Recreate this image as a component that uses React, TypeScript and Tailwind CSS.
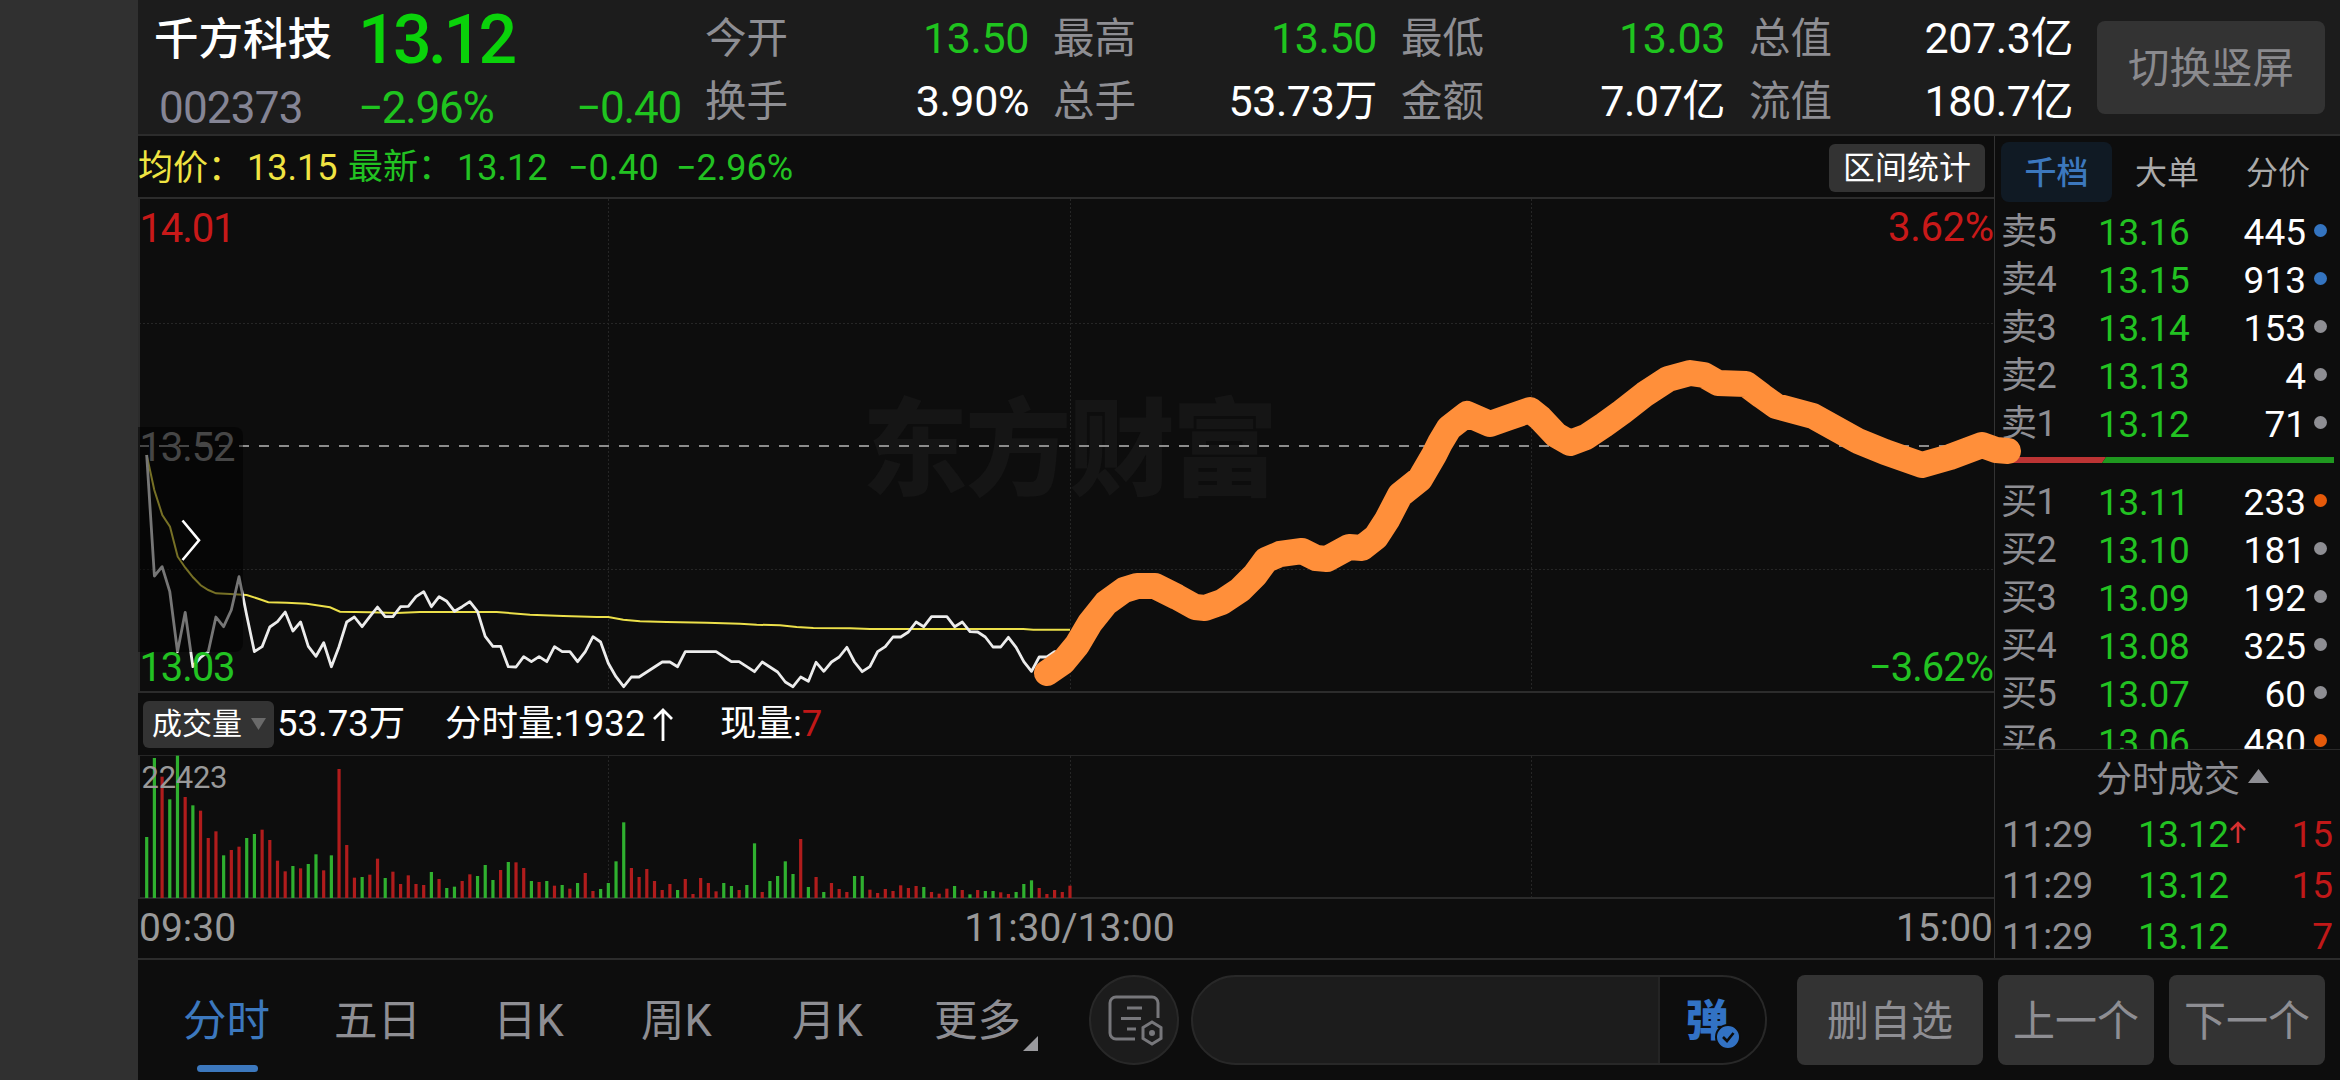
import { clsx } from "clsx";

const quotes = [
  [
    { label: "今开", value: "13.50", down: true },
    { label: "换手", value: "3.90%" },
  ],
  [
    { label: "最高", value: "13.50", down: true },
    { label: "总手", value: "53.73万" },
  ],
  [
    { label: "最低", value: "13.03", down: true },
    { label: "金额", value: "7.07亿" },
  ],
  [
    { label: "总值", value: "207.3亿" },
    { label: "流值", value: "180.7亿" },
  ],
];

const asks = [
  { label: "卖5", price: "13.16", qty: 445, dot: "bg-[#3474c0]" },
  { label: "卖4", price: "13.15", qty: 913, dot: "bg-[#3474c0]" },
  { label: "卖3", price: "13.14", qty: 153, dot: "bg-[#8e8e93]" },
  { label: "卖2", price: "13.13", qty: 4, dot: "bg-[#8e8e93]" },
  { label: "卖1", price: "13.12", qty: 71, dot: "bg-[#8e8e93]" },
];

const bids = [
  { label: "买1", price: "13.11", qty: 233, dot: "bg-[#e65a0a]" },
  { label: "买2", price: "13.10", qty: 181, dot: "bg-[#8e8e93]" },
  { label: "买3", price: "13.09", qty: 192, dot: "bg-[#8e8e93]" },
  { label: "买4", price: "13.08", qty: 325, dot: "bg-[#8e8e93]" },
  { label: "买5", price: "13.07", qty: 60, dot: "bg-[#8e8e93]" },
  { label: "买6", price: "13.06", qty: 480, dot: "bg-[#e65a0a]" },
];

const trades = [
  { time: "11:29", price: "13.12", qty: 15, up: true },
  { time: "11:29", price: "13.12", qty: 15 },
  { time: "11:29", price: "13.12", qty: 7 },
];

// One value per minute, in thirds of a pixel below the chart's y = 380
const prices = [
  225, 588, 560, 635, 815, 697, 860, 832, 815, 711, 740, 690, 590, 706, 815, 800, 741, 725, 696, 753,
  726, 799, 829, 788, 860, 800, 726, 711, 740, 710, 681, 710, 710, 680, 679, 650, 635, 680, 650, 664,
  694, 680, 665, 694, 769, 799, 799, 860, 861, 830, 845, 830, 845, 800, 815, 815, 845, 815, 770, 786,
  850, 890, 920, 891, 891, 876, 861, 846, 846, 860, 815, 815, 815, 815, 815, 830, 845, 845, 860, 875,
  846, 861, 876, 906, 920, 891, 904, 847, 874, 846, 831, 802, 846, 875, 860, 815, 800, 771, 771, 756,
  726, 740, 710, 710, 710, 740, 726, 755, 756, 771, 801, 801, 772, 802, 845, 874, 831, 831, 815, 815,
];

const average = [
  [50, 225], [73, 330], [97, 405], [120, 440], [143, 530], [166, 563], [189, 592], [212, 616], [235, 630],
  [258, 640], [300, 642], [350, 645], [385, 656], [415, 667], [470, 668], [530, 671], [560, 676], [600, 682],
  [630, 695], [720, 697], [800, 699], [870, 696], [1100, 696], [1200, 704], [1300, 708], [1400, 711],
  [1435, 711], [1480, 719], [1530, 724], [1610, 726], [1730, 728], [1830, 731], [1880, 734], [1950, 736],
  [2000, 741], [2050, 744], [2160, 745], [2220, 747], [2680, 747], [2710, 749], [2820, 749],
];

// Negative = falling minute (green), positive = rising minute (red)
const volumes = [
  -183, -420, 364, -296, -427, 303, -278, 262, 180, 200, -128, 144, 154, -180, -192, 205, 174, 112, 80, -96,
  89, -102, -131, 83, -128, 387, 159, 61, -63, 70, 118, -60, 79, 42, 68, 42, 39, -78, 57, -30,
  -34, 51, 71, -66, -99, -54, 84, -108, 107, 90, -51, 48, -51, 37, -39, 28, -45, 75, 21, -27,
  -45, -110, -227, 90, 63, 87, 51, 24, 42, -24, 57, 12, 60, 45, 20, -45, -36, 24, -39, -164,
  18, -51, -66, -110, -72, 177, -33, 63, -18, 45, 27, 18, -66, -66, 25, 15, 27, 21, 38, 30,
  36, -33, 18, 13, 28, -36, 24, -11, 24, -21, -21, 17, 12, -18, -42, -53, 30, 12, 24, 18, 37,
];

const minuteX = (i: number) => 146.7 + i * 7.694;
const pricePoints = prices.map((p, i) => `${minuteX(i).toFixed(1)},${(380 + p / 3).toFixed(1)}`).join(" ");
const averagePoints = average.map(([x, y]) => `${(130 + x / 3).toFixed(1)},${(380 + y / 3).toFixed(1)}`).join(" ");

const brush =
  "1047,673 1063,662 1077,645 1090,623 1106,603 1124,590 1137,586 1155,586 1177,597 1195,607 1205,608 1222,602 1240,590 1255,575 1266,560 1280,554 1302,551 1316,558 1327,559 1349,547 1362,548 1376,537 1387,520 1400,495 1420,479 1434,455 1440,443 1449,428 1467,414 1490,424 1507,418 1530,410 1540,418 1556,435 1570,443 1586,437 1604,425 1622,412 1645,394 1668,379 1690,373 1704,375 1718,383 1746,384 1762,396 1776,406 1813,416 1858,441 1885,452 1922,465 1950,457 1982,445 1996,450 2008,451";

function QuoteHeader() {
  return (
    <header className="flex h-[136px] shrink-0 border-b-2 border-[#2c2c2c] bg-[#1c1c1c] pr-[15px]">
      <div className="w-[567px] pl-4">
        <div className="flex h-[74px] items-center pt-1.5">
          <h1 className="w-[204px] text-[44.5px] leading-none font-medium text-white">千方科技</h1>
          <span className="text-[68px] leading-none font-medium tracking-[-3.6px] text-[#0ad20a]">13.12</span>
        </div>
        <div className="flex h-[67px] items-center text-[44px] leading-none">
          <span className="w-[204px] pl-[5px] tracking-[-0.8px] text-[#858595]">002373</span>
          <span className="tracking-[-1.3px] text-[#1fc41f]">−2.96%</span>
          <span className="ml-auto pr-[24px] tracking-[-1.2px] text-[#1fc41f]">−0.40</span>
        </div>
      </div>
      <div className="flex gap-[22px]">
        {quotes.map((column, index) => (
          <div key={index} className="flex w-[326px] flex-col pt-[7px]">
            {column.map((item) => (
              <div key={item.label} className="flex h-[63px] items-center justify-between leading-none">
                <span className="text-[41.5px] text-[#8e8e93]">{item.label}</span>
                <span className={clsx("pr-[2px] text-[43px] tracking-[-0.4px]", item.down ? "text-[#1fc41f]" : "text-white")}>
                  {item.value}
                </span>
              </div>
            ))}
          </div>
        ))}
      </div>
      <button className="mt-[21px] ml-auto h-[93px] w-[228px] rounded-lg bg-[#333] pt-[2px] text-[41.5px] leading-none text-[#8a8a8e]">
        切换竖屏
      </button>
    </header>
  );
}

function PriceChart() {
  return (
    <svg className="relative z-10 block h-[494px] w-[1856px] shrink-0 overflow-visible" viewBox="138 199 1856 494">
      <text
        x="1070"
        y="487"
        textAnchor="middle"
        textLength="416"
        className="fill-[#151515] text-[106px] font-black"
      >
        东方财富
      </text>
      <g stroke="#262626" strokeWidth="1" strokeDasharray="2 2">
        <path d="M139 323.5H1994M139 569.5H1994" />
        <path d="M608.5 199V692M1070.5 199V692M1531.5 199V692" />
      </g>
      <path d="M139 446H1994" stroke="#8c8c8c" strokeWidth="2" strokeDasharray="10 10" />
      <path d="M139 199V692H1994" fill="none" stroke="#2c2c2c" strokeWidth="2" />
      <text x="139.5" y="461" className="fill-[#8c8c8c] text-[40px]" textLength="96">13.52</text>
      <polyline points={averagePoints} fill="none" stroke="#ece04a" strokeWidth="2" />
      <polyline points={pricePoints} fill="none" stroke="#ececec" strokeWidth="2.8" strokeLinejoin="round" />
      <path d="M138 427H235a8 8 0 0 1 8 8V644a8 8 0 0 1-8 8H138Z" fill="#000" fillOpacity="0.5" />
      <path d="M182.5 520.5L199 540.3L182.5 560" fill="none" stroke="#fff" strokeWidth="2.6" />
      <g className="text-[40px]">
        <text x="139.5" y="242" className="fill-[#c81919]" textLength="96">14.01</text>
        <text x="139.5" y="681" className="fill-[#22c222]" textLength="96">13.03</text>
        <text x="1888" y="241" className="fill-[#c81919]" textLength="106">3.62%</text>
        <text x="1869" y="681" className="fill-[#22c222]" textLength="125">−3.62%</text>
      </g>
      <polyline
        points={brush}
        fill="none"
        stroke="#ff8f3a"
        strokeWidth="26"
        strokeLinejoin="round"
        strokeLinecap="round"
      />
    </svg>
  );
}

function VolumeChart() {
  return (
    <svg className="block h-[144px] w-[1856px] shrink-0" viewBox="138 755 1856 144">
      <path d="M139 755.5H1994" stroke="#262626" />
      <g stroke="#262626" strokeDasharray="2 2">
        <path d="M608.5 756V897M1070.5 756V897M1531.5 756V897" />
      </g>
      <path d="M139 755V898H1994" fill="none" stroke="#2a2a2a" strokeWidth="2" />
      {volumes.map((v, i) => (
        <rect
          key={i}
          x={minuteX(i) - 1.6}
          y={898 - Math.abs(v) / 3}
          width="3.2"
          height={Math.abs(v) / 3}
          fill={v < 0 ? "#2fb02f" : "#b01c1c"}
        />
      ))}
      <text x="141.5" y="788" className="fill-[#999] text-[31px]" textLength="86">22423</text>
    </svg>
  );
}

function BookRow({ label, price, qty, dot }: (typeof asks)[number]) {
  return (
    <div className="flex h-12 shrink-0 items-center text-[37px] leading-none">
      <span className="w-[97px] text-[36px] tracking-[-0.5px] text-[#8e8e93]">{label}</span>
      <span className="tracking-[-0.3px] text-[#22c222]">{price}</span>
      <span className="ml-auto text-white">{qty}</span>
      <i className={clsx("mr-[13px] mb-1 ml-[8px] size-[13px] rounded-full", dot)} />
    </div>
  );
}

function OrderBook() {
  return (
    <aside className="flex w-[346px] flex-col border-l border-[#333]">
      <div className="flex h-[71px] shrink-0 items-start pt-[6px] pl-[6px] text-[32px] leading-none text-[#aaa]">
        <button className="h-[60px] w-[111px] rounded-lg bg-[#101a24] pt-[2px] font-medium text-[#3c78be]">千档</button>
        <button className="h-[60px] w-[110px] pt-[2px]">大单</button>
        <button className="h-[60px] w-[112px] pt-[2px]">分价</button>
      </div>
      <div className="flex h-[542px] shrink-0 flex-col overflow-hidden pt-px pl-[6px]">
        {asks.map((row) => (
          <BookRow key={row.label} {...row} />
        ))}
        <svg className="mt-[9px] mb-[15px] block h-[6px] w-[333px] shrink-0" viewBox="0 0 333 6">
          <path d="M0 0H105L101 6H0Z" fill="#bc3434" />
          <path d="M105 0H333V6H101Z" fill="#1f981f" />
        </svg>
        {bids.map((row) => (
          <BookRow key={row.label} {...row} />
        ))}
      </div>
      <div className="flex h-[209px] shrink-0 flex-col border-t border-[#2a2a2a] pl-[7px]">
        <div className="flex h-[59px] shrink-0 items-center gap-[8px] pl-[94px] text-[36px] leading-none text-[#8e8e93]">
          分时成交
          <svg className="mb-2 h-[14px] w-[21px]" viewBox="0 0 21 14">
            <path d="M10.5 0L21 14H0Z" fill="#8e8e93" />
          </svg>
        </div>
        {trades.map((trade, index) => (
          <div key={index} className="flex h-[51px] shrink-0 items-center text-[37px] leading-none">
            <span className="w-[136px] tracking-[-0.2px] text-[#8e8e93]">{trade.time}</span>
            <span className="tracking-[-0.5px] text-[#22c222]">{trade.price}</span>
            {trade.up && (
              <svg className="mb-1 ml-[2px] h-[23px] w-[16px]" viewBox="0 0 16 23">
                <path d="M8 22V2M1 9L8 2L15 9" fill="none" stroke="#d63030" strokeWidth="2.6" />
              </svg>
            )}
            <span className="ml-auto pr-[7px] text-[#c01818]">{trade.qty}</span>
          </div>
        ))}
      </div>
    </aside>
  );
}

function Toolbar() {
  return (
    <footer className="flex h-[122px] shrink-0 items-start border-t-2 border-[#2c2c2c] pt-[15px] pr-[15px] text-[43.5px] leading-none text-[#8e8e93]">
      <nav className="flex w-[951px] pl-[45px]">
        <button className="flex h-[98px] w-[151px] flex-col text-[#3c78be]">
          <span className="flex h-[90px] items-center pt-[3px]">分时</span>
          <i className="ml-[14px] h-[7px] w-[61px] shrink-0 rounded-full bg-[#3c78be]" />
        </button>
        <button className="h-[90px] w-[159px] pt-[3px] text-left">五日</button>
        <button className="h-[90px] w-[148px] pt-[3px] text-left">日K</button>
        <button className="h-[90px] w-[151px] pt-[3px] text-left">周K</button>
        <button className="h-[90px] w-[142px] pt-[3px] text-left">月K</button>
        <button className="flex h-[90px] items-center pt-[3px]">
          更多
          <svg className="mt-[44px] ml-[2px] size-[15px]" viewBox="0 0 15 15">
            <path d="M15 0V15H0Z" fill="#9a9a9e" />
          </svg>
        </button>
      </nav>
      <button className="flex size-[90px] items-center justify-center rounded-full border-2 border-[#282828] bg-[#1c1c1c]">
        <svg className="h-[52px] w-[58px]" viewBox="0 0 58 52" fill="none" stroke="#77777b" strokeWidth="3">
          <path d="M30 45H11a6 6 0 0 1-6-6V9a6 6 0 0 1 6-6H47a6 6 0 0 1 6 6V24" />
          <path d="M22 14H37M16 24.500H36M22 35H31" />
          <path d="M47 28L56 33.500V44.500L47 50L38 44.500V33.500Z" />
          <circle cx="47" cy="39" r="1.500" />
        </svg>
      </button>
      <div className="ml-[12px] flex h-[90px] w-[576px] overflow-hidden rounded-full border-2 border-[#282828] bg-[#1c1c1c]">
        <div className="flex-1" />
        <button className="relative w-[107px] border-l-2 border-[#242424] bg-[#0d0d0d] pt-[2px] pr-[11px] text-[43px] font-black text-[#3272c4]">
          弹
          <svg className="absolute top-[47px] left-[55px] size-[26px]" viewBox="0 0 26 26">
            <circle cx="13" cy="13" r="12" fill="#3272c4" stroke="#0d0d0d" strokeWidth="2" />
            <path d="M8 13L12 17L18.500 9" fill="none" stroke="#0d0d0d" strokeWidth="2.600" />
          </svg>
        </button>
      </div>
      <button className="ml-[30px] h-[90px] w-[186px] rounded-lg bg-[#333] pt-[3px] text-[42px]">删自选</button>
      <button className="ml-[15px] h-[90px] w-[156px] rounded-lg bg-[#333] pt-[3px] text-[42px]">上一个</button>
      <button className="ml-[15px] h-[90px] w-[156px] rounded-lg bg-[#333] pt-[3px] text-[42px]">下一个</button>
    </footer>
  );
}

export default function App() {
  return (
    <div className="flex h-[1080px] w-[2340px] overflow-hidden bg-[#0d0d0d] font-['Roboto','Noto_Sans_CJK_SC',sans-serif] whitespace-nowrap">
      <div className="w-[138px] shrink-0 bg-[#303030]" />
      <div className="flex flex-1 flex-col">
        <QuoteHeader />
        <div className="flex h-[822px] shrink-0">
          <main className="flex w-[1856px] flex-col">
            <div className="flex h-[63px] shrink-0 items-center border-b-2 border-[#2c2c2c] pt-[2px] pr-[9px] text-[36px] leading-none text-[#22c222]">
              <span className="w-[210px] text-[#f0e442]">
                <span className="inline-block w-[109px] text-[35px]">均价：</span>13.15
              </span>
              <span className="inline-block w-[109px] text-[35px]">最新：</span>
              <span className="w-[111px]">13.12</span>
              <span className="w-[108px]">−0.40</span>
              <span>−2.96%</span>
              <button className="ml-auto h-[48px] w-[156px] rounded-md bg-[#333] pt-px text-[32px] text-white">区间统计</button>
            </div>
            <PriceChart />
            <div className="flex h-[62px] shrink-0 items-center pl-[5px] text-[36.5px] leading-none text-white">
              <button className="flex h-[47px] w-[131px] items-center gap-[9px] rounded-md bg-[#333] pl-[9px] text-[30px]">
                成交量
                <svg className="h-[12px] w-[15px]" viewBox="0 0 15 12">
                  <path d="M0 0H15L7.500 12Z" fill="#6a6a6a" />
                </svg>
              </button>
              <span className="w-[171px] pl-[3px]">53.73万</span>
              <span className="w-[207px]">分时量:1932</span>
              <svg className="mr-[46px] h-[33px] w-[22px]" viewBox="0 0 22 33">
                <path d="M11 33V2M2 11L11 2L20 11" fill="none" stroke="#fff" strokeWidth="2.800" />
              </svg>
              <span>
                现量:<span className="text-[#c01818]">7</span>
              </span>
            </div>
            <VolumeChart />
            <div className="flex h-[59px] shrink-0 items-center justify-between pl-px text-[39px] leading-none text-[#999]">
              <span className="w-[206px]">09:30</span>
              <span>11:30/13:00</span>
              <span className="w-[200px] pr-px text-right">15:00</span>
            </div>
          </main>
          <OrderBook />
        </div>
        <Toolbar />
      </div>
    </div>
  );
}
